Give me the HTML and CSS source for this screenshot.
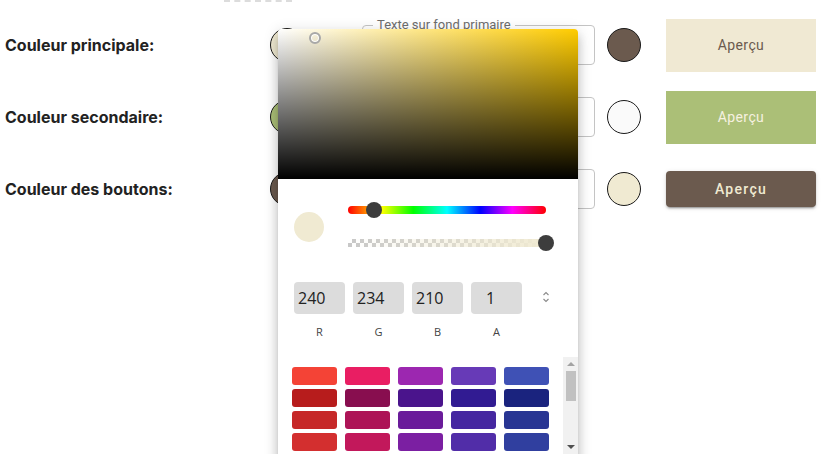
FILE: index.html
```html
<!DOCTYPE html>
<html lang="fr">
<head>
<meta charset="utf-8">
<title>Couleurs</title>
<link rel="stylesheet" href="styles.css">
</head>
<body>
<div class="page">
  <div class="topdash"></div>
  <div class="rows">
    <div class="row">
      <div class="label">Couleur principale:</div>
      <div class="dot dot-beige"></div>
      <div class="field"><span class="legend">Texte sur fond primaire</span></div>
      <div class="dot dot-brown"></div>
      <div class="preview preview-primary">Aperçu</div>
    </div>
    <div class="row">
      <div class="label">Couleur secondaire:</div>
      <div class="dot dot-green"></div>
      <div class="field"><span class="legend">Texte sur fond secondaire</span></div>
      <div class="dot dot-white"></div>
      <div class="preview preview-secondary">Aperçu</div>
    </div>
    <div class="row">
      <div class="label">Couleur des boutons:</div>
      <div class="dot dot-brown"></div>
      <div class="field"><span class="legend">Texte des boutons</span></div>
      <div class="dot dot-beige"></div>
      <div class="preview-btn">Aperçu</div>
    </div>
  </div>

  <div class="picker">
    <div class="sat">
      <div class="sat-handle"></div>
    </div>
    <div class="picker-body">
      <div class="controls">
        <div class="swatch-preview"></div>
        <div class="sliders">
          <div class="hue"><div class="thumb thumb-hue"></div></div>
          <div class="alpha"><div class="alpha-fill"></div><div class="thumb thumb-alpha"></div></div>
        </div>
      </div>
      <div class="inputs">
        <div class="inp-col"><div class="inp">240</div><div class="inp-lbl">R</div></div>
        <div class="inp-col"><div class="inp">234</div><div class="inp-lbl">G</div></div>
        <div class="inp-col"><div class="inp">210</div><div class="inp-lbl">B</div></div>
        <div class="inp-col"><div class="inp inp-a">1</div><div class="inp-lbl">A</div></div>
        <div class="toggle">
          <svg width="10" height="14" viewBox="0 0 10 14"><path d="M2.5 5 L5 2.5 L7.5 5" fill="none" stroke="#8a8a8a" stroke-width="1.1"/><path d="M2.5 9 L5 11.5 L7.5 9" fill="none" stroke="#8a8a8a" stroke-width="1.1"/></svg>
        </div>
      </div>
      <div class="palette">
        <div class="grid">
          <div class="sw" style="background:#f44336"></div>
          <div class="sw" style="background:#e91e63"></div>
          <div class="sw" style="background:#9c27b0"></div>
          <div class="sw" style="background:#673ab7"></div>
          <div class="sw" style="background:#3f51b5"></div>
          <div class="sw" style="background:#b71c1c"></div>
          <div class="sw" style="background:#880e4f"></div>
          <div class="sw" style="background:#4a148c"></div>
          <div class="sw" style="background:#311b92"></div>
          <div class="sw" style="background:#1a237e"></div>
          <div class="sw" style="background:#c62828"></div>
          <div class="sw" style="background:#ad1457"></div>
          <div class="sw" style="background:#6a1b9a"></div>
          <div class="sw" style="background:#4527a0"></div>
          <div class="sw" style="background:#283593"></div>
          <div class="sw" style="background:#d32f2f"></div>
          <div class="sw" style="background:#c2185b"></div>
          <div class="sw" style="background:#7b1fa2"></div>
          <div class="sw" style="background:#512da8"></div>
          <div class="sw" style="background:#303f9f"></div>
        </div>
        <div class="scrollbar">
          <div class="sb-up"></div>
          <div class="sb-thumb"></div>
          <div class="sb-space"></div>
          <div class="sb-down"></div>
        </div>
      </div>
    </div>
  </div>
</div>
</body>
</html>
```

FILE: styles.css
```css
html, body {
  margin: 0;
  padding: 0;
  background: #ffffff;
  overflow: hidden;
}
.page {
  position: relative;
  width: 823px;
  height: 454px;
  overflow: hidden;
}
.topdash {
  margin-left: 224px;
  width: 68px;
  height: 0;
  border-top: 2px dashed #dcdcdc;
}
.rows {
  display: flex;
  flex-direction: column;
  padding-top: 7px;
  padding-left: 5px;
}
.row {
  display: flex;
  align-items: center;
  height: 72px;
}
.label {
  width: 265px;
  font-family: "Inter", "Noto Sans", sans-serif;
  font-weight: 700;
  font-size: 16px;
  color: #222222;
}
.dot {
  width: 32px;
  height: 32px;
  border-radius: 50%;
  border: 1.5px solid #1a1a1a;
  flex: none;
}
.dot-beige { background: #f0ead2; }
.dot-brown { background: #6b5a4e; }
.dot-green { background: #abbf77; }
.dot-white { background: #fafafa; }
.field {
  position: relative;
  margin-left: 58px;
  width: 231px;
  height: 38px;
  border: 1px solid #c4c4c4;
  border-radius: 4px;
  flex: none;
}
.legend {
  position: absolute;
  left: 10px;
  top: -9px;
  padding: 0 4px;
  background: #ffffff;
  font-family: "Roboto", sans-serif;
  font-size: 13px;
  line-height: 16px;
  color: #6d6d6d;
}
.field + .dot {
  margin-left: 12px;
}
.preview {
  margin-left: 25px;
  width: 150px;
  height: 53px;
  display: flex;
  align-items: center;
  justify-content: center;
  font-family: "Roboto", sans-serif;
  font-size: 14px;
  letter-spacing: 0.4px;
  flex: none;
}
.preview-primary {
  background: #f0e9d3;
  color: #6b5a4e;
}
.preview-secondary {
  background: #abbf77;
  color: #f6f1e0;
}
.preview-btn {
  margin-left: 25px;
  width: 150px;
  height: 36px;
  border-radius: 4px;
  background: #6b5a4e;
  color: #f0ead2;
  display: flex;
  align-items: center;
  justify-content: center;
  font-family: "Roboto", sans-serif;
  font-weight: 500;
  font-size: 14px;
  letter-spacing: 1.3px;
  box-shadow: 0 3px 1px -2px rgba(0,0,0,0.2), 0 2px 2px 0 rgba(0,0,0,0.14), 0 1px 5px 0 rgba(0,0,0,0.12);
  flex: none;
}

/* Picker popover */
.picker {
  position: absolute;
  left: 278px;
  top: 29px;
  width: 300px;
  height: 460px;
  background: #ffffff;
  border-radius: 4px;
  box-shadow: 0 5px 5px -3px rgba(0,0,0,0.2), 0 8px 10px 1px rgba(0,0,0,0.14), 0 3px 14px 2px rgba(0,0,0,0.12);
  display: flex;
  flex-direction: column;
}
.sat {
  position: relative;
  height: 150px;
  border-radius: 4px 4px 0 0;
  background:
    linear-gradient(to top, #000000, rgba(0,0,0,0)),
    linear-gradient(to right, #ffffff, #ffcc00);
}
.sat-handle {
  position: absolute;
  left: 31px;
  top: 3px;
  width: 8px;
  height: 8px;
  border-radius: 50%;
  border: 2px solid #a8a8a8;
  box-shadow: inset 0 0 0 1px #ffffff;
}
.picker-body {
  display: flex;
  flex-direction: column;
}
.controls {
  display: flex;
  align-items: center;
  padding: 27px 0 0 16px;
}
.swatch-preview {
  width: 30px;
  height: 30px;
  border-radius: 50%;
  background: #f0ead2;
  flex: none;
}
.sliders {
  margin-left: 24px;
  width: 198px;
  display: flex;
  flex-direction: column;
  gap: 25px;
}
.hue {
  position: relative;
  height: 8px;
  border-radius: 4px;
  background: linear-gradient(to right, #ff0000 0%, #ffff00 17%, #00ff00 33%, #00ffff 50%, #0000ff 67%, #ff00ff 83%, #ff0000 100%);
}
.alpha {
  position: relative;
  height: 8px;
  background-color: #ffffff;
  background-image:
    linear-gradient(45deg, #c8c8c8 25%, transparent 25%, transparent 75%, #c8c8c8 75%),
    linear-gradient(45deg, #c8c8c8 25%, transparent 25%, transparent 75%, #c8c8c8 75%);
  background-size: 8px 8px;
  background-position: 0 0, 4px 4px;
}
.alpha-fill {
  position: absolute;
  inset: 0;
  background: linear-gradient(to right, rgba(240,234,210,0), rgba(240,234,210,1));
}
.thumb {
  position: absolute;
  width: 16px;
  height: 16px;
  border-radius: 50%;
  background: #3d3d3d;
  top: -4px;
}
.thumb-hue { left: 18px; }
.thumb-alpha { left: 190px; }
.inputs {
  display: flex;
  align-items: flex-start;
  padding: 35px 0 0 16px;
  gap: 8px;
}
.inp-col {
  display: flex;
  flex-direction: column;
  align-items: center;
  width: 51px;
}
.inp {
  box-sizing: border-box;
  width: 51px;
  height: 32px;
  border-radius: 4px;
  background: #dcdcdc;
  font-family: "Open Sans", sans-serif;
  font-size: 16px;
  line-height: 32px;
  color: #222222;
  padding-left: 4px;
}
.inp-a {
  padding-left: 15px;
}
.inp-lbl {
  margin-top: 10px;
  font-family: "Open Sans", sans-serif;
  font-size: 11px;
  color: #444444;
}
.toggle {
  margin-left: 11px;
  padding-top: 8px;
}
.palette {
  display: flex;
  margin-top: 18px;
  height: 100px;
}
.grid {
  display: grid;
  grid-template-columns: repeat(5, 45px);
  grid-auto-rows: 18px;
  column-gap: 8px;
  row-gap: 4px;
  padding: 10px 0 0 14px;
  width: 285px;
  box-sizing: border-box;
}
.sw {
  border-radius: 3px;
}
.scrollbar {
  width: 15px;
  background: #f1f1f1;
  display: flex;
  flex-direction: column;
  align-items: center;
}
.sb-up {
  margin-top: 5px;
  width: 0;
  height: 0;
  border-left: 4px solid transparent;
  border-right: 4px solid transparent;
  border-bottom: 4px solid #a3a3a3;
}
.sb-thumb {
  margin-top: 5px;
  width: 10px;
  height: 30px;
  background: #c1c1c1;
}
.sb-space {
  flex: 1;
}
.sb-down {
  margin-bottom: 8px;
  width: 0;
  height: 0;
  border-left: 4px solid transparent;
  border-right: 4px solid transparent;
  border-top: 4px solid #505050;
}
```
